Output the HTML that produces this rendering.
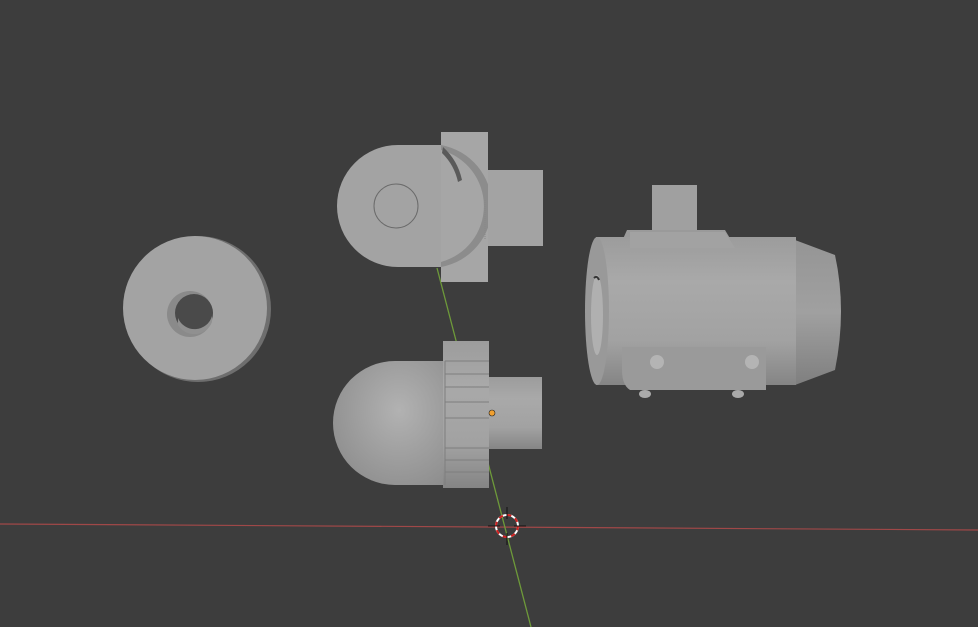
<!DOCTYPE html>
<html><head><style>html,body{margin:0;padding:0;background:#3d3d3d;}svg{display:block}</style></head>
<body>
<svg width="978" height="627" viewBox="0 0 978 627" xmlns="http://www.w3.org/2000/svg">
<defs>
<linearGradient id="vg" x1="0" y1="0" x2="0" y2="1">
<stop offset="0" stop-color="#9c9c9c"/><stop offset="0.3" stop-color="#a9a9a9"/><stop offset="0.7" stop-color="#a2a2a2"/><stop offset="1" stop-color="#858585"/></linearGradient>
<linearGradient id="cone" x1="0" y1="0" x2="0" y2="1">
<stop offset="0" stop-color="#959595"/><stop offset="0.5" stop-color="#a0a0a0"/><stop offset="1" stop-color="#7f7f7f"/></linearGradient>
<radialGradient id="dome" cx="0.6" cy="0.4" r="0.7">
<stop offset="0" stop-color="#b2b2b2"/><stop offset="1" stop-color="#8e8e8e"/></radialGradient>
</defs>
<rect width="978" height="627" fill="#3d3d3d"/>
<line x1="0" y1="524" x2="978" y2="530" stroke="#a04848" stroke-width="1.2"/>
<line x1="437" y1="268" x2="531" y2="627" stroke="#6e9a3a" stroke-width="1.3"/>
<!-- ring -->
<circle cx="198" cy="309" r="73" fill="#6e6e6e"/>
<circle cx="195" cy="308" r="72" fill="#a3a3a3"/>
<circle cx="190" cy="314" r="23" fill="#8a8a8a"/>
<circle cx="194" cy="313" r="19" fill="#4a4a4a"/>
<path d="M178 318 A18 18 0 0 0 212 316 L212 322 A19 19 0 0 1 178 325Z" fill="#909090"/>
<!-- top-left piece -->
<path d="M398 145 L442 145 L442 267 L398 267 A61 61 0 0 1 398 145Z" fill="#a3a3a3"/>
<circle cx="396" cy="206" r="22" fill="none" stroke="#6a6a6a" stroke-width="1"/>
<rect x="441" y="132" width="47" height="150" fill="#a6a6a6"/>
<path d="M441 145 A62 62 0 0 1 441 267 L441 262 A58 58 0 0 0 441 150Z" fill="#8c8c8c"/>
<path d="M443 147 A62 62 0 0 1 462 180 L458 182 A58 58 0 0 0 442 153Z" fill="#5a5a5a"/>
<rect x="488" y="170" width="55" height="76" fill="#a3a3a3"/>
<line x1="485" y1="200" x2="485" y2="240" stroke="#888" stroke-dasharray="1 1"/>
<!-- bottom piece -->
<path d="M395 361 L443 361 L443 485 L395 485 A62 62 0 0 1 395 361Z" fill="url(#dome)"/>
<rect x="443" y="341" width="46" height="147" fill="url(#vg)"/>
<g stroke="#7e7e7e" stroke-width="1">
<line x1="445" y1="361" x2="489" y2="361"/><line x1="445" y1="374" x2="489" y2="374"/>
<line x1="445" y1="387" x2="489" y2="387"/><line x1="445" y1="402" x2="489" y2="402"/>
<line x1="445" y1="418" x2="489" y2="418"/><line x1="445" y1="448" x2="489" y2="448"/>
<line x1="445" y1="460" x2="489" y2="460"/><line x1="445" y1="472" x2="489" y2="472"/>
<line x1="445" y1="361" x2="445" y2="485"/>
</g>
<rect x="489" y="377" width="53" height="72" fill="url(#vg)"/>
<circle cx="492" cy="413" r="3" fill="#f0a030" stroke="#222" stroke-width="0.6"/>
<!-- right cylinder -->
<rect x="652" y="185" width="45" height="47" fill="#a0a0a0"/>
<path d="M627 230 L725 230 L737 250 L618 250Z" fill="#9a9a9a"/>
<path d="M795 240 L835 255 Q847 310 835 370 L795 385Z" fill="url(#cone)"/>
<rect x="596" y="237" width="200" height="148" fill="url(#vg)"/>
<path d="M630 232 L725 232 L735 248 L630 248Z" fill="#a2a2a2"/>
<ellipse cx="597" cy="311" rx="12" ry="74" fill="#999"/>
<ellipse cx="597" cy="315" rx="6" ry="40" fill="#b0b0b0"/>
<path d="M594 278 Q597 275 599 280" stroke="#333" stroke-width="2" fill="none"/>
<path d="M622 347 L766 347 L766 390 L630 390 Q622 385 622 370Z" fill="#9a9a9a"/>
<circle cx="657" cy="362" r="7" fill="#b4b4b4"/>
<circle cx="752" cy="362" r="7" fill="#b4b4b4"/>
<ellipse cx="645" cy="394" rx="6" ry="4" fill="#aaa"/>
<ellipse cx="738" cy="394" rx="6" ry="4" fill="#aaa"/>
<!-- 3D cursor -->
<circle cx="507" cy="526" r="11" fill="none" stroke="#fff" stroke-width="2"/>
<circle cx="507" cy="526" r="11" fill="none" stroke="#d02020" stroke-width="2" stroke-dasharray="4.3 4.3"/>
<g stroke="#111" stroke-width="1"><line x1="507" y1="507" x2="507" y2="519"/><line x1="507" y1="533" x2="507" y2="545"/><line x1="488" y1="526" x2="500" y2="526"/><line x1="514" y1="526" x2="526" y2="526"/></g>
</svg>
</body></html>
